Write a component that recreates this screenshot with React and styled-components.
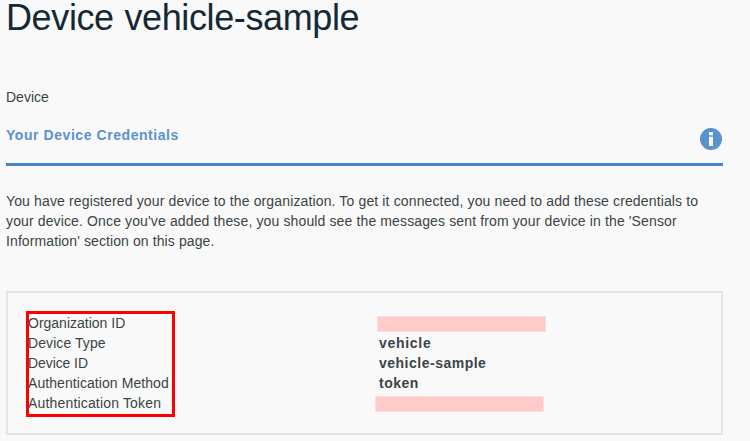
import React from 'react';
import styled, { createGlobalStyle } from 'styled-components';

const GlobalStyle = createGlobalStyle`
  * { box-sizing: border-box; }
  body { margin: 0; background: #f9f9f9; }
`;
const Page = styled.main`
  width: 750px;
  height: 441px;
  padding: 0 27px 0 6px;
  background: #f9f9f9;
  color: #3a4446;
  font: 14px/20px "Liberation Sans", Arial, sans-serif;
`;
const Title = styled.h1`
  margin: 0;
  height: 87px;
  color: #152935;
  font-size: 36px;
  line-height: 36px;
  font-weight: 400;
  letter-spacing: -0.38px;
  word-spacing: 1px;
  white-space: nowrap;
`;
const Crumb = styled.div`
  height: 38px;
`;
const SectionHeader = styled.header`
  display: flex;
  justify-content: space-between;
  height: 41px;
  border-bottom: 3px solid #4885c9;
`;
const SectionTitle = styled.h2`
  margin: 0;
  color: #5a91d0;
  font-size: 14px;
  line-height: 20px;
  letter-spacing: 0.56px;
`;
const InfoIcon = styled.svg`
  width: 24px;
  height: 24px;
  margin-top: 2px;
`;
const Intro = styled.p`
  margin: 25px 0 0;
  height: 100px;
  white-space: nowrap;
`;
const Line = styled.span`
  display: block;
  letter-spacing: ${(p) => p.$tracking}px;
`;
const Card = styled.section`
  display: flex;
  height: 144px;
  padding: 18px 0 0 18px;
  border: 2px solid #e5e5e5;
`;
const Labels = styled.div`
  width: 149px;
  height: 106px;
  border: 3px solid #ff0000;
  margin-right: 201px;
  white-space: nowrap;
`;
const Label = styled.div`
  height: 20px;
  margin: 0 -1px;
  line-height: 18px;
  letter-spacing: ${(p) => p.$tracking}px;
`;
const Values = styled.div`
  padding-top: 3px;
  width: 180px;
`;
const Value = styled.div`
  height: 20px;
  padding-left: 3px;
  line-height: 18px;
  font-weight: 700;
  letter-spacing: ${(p) => p.$tracking}px;
`;
const Redaction = styled.div`
  width: 169px;
  height: 16px;
  margin: ${(p) => (p.$last ? '2px 0 0 -1px' : '2px 0 2px 1px')};
  border: 1px solid #ffdcdc;
  background: #ffcaca;
`;

const labels = [
  ['Organization ID', 0],
  ['Device Type', 0.08],
  ['Device ID', -0.08],
  ['Authentication Method', 0.07],
  ['Authentication Token', 0.17],
];

export default function App() {
  return (
    <>
      <GlobalStyle />
      <Page>
        <Title>Device vehicle-sample</Title>
        <Crumb>Device</Crumb>
        <SectionHeader>
          <SectionTitle>Your Device Credentials</SectionTitle>
          <InfoIcon viewBox="0 0 24 24" aria-label="Information">
            <circle cx="12" cy="12" r="11" fill="#5a92cf" />
            <path d="M10 5h4v3.2h-4zM10 9.8h4V19h-4z" fill="#f9f9f9" />
          </InfoIcon>
        </SectionHeader>
        <Intro>
          <Line $tracking={0.137}>You have registered your device to the organization. To get it connected, you need to add these credentials to</Line>
          <Line $tracking={0.13}>your device. Once you've added these, you should see the messages sent from your device in the 'Sensor</Line>
          <Line $tracking={0.1}>Information' section on this page.</Line>
        </Intro>
        <Card>
          <Labels>
            {labels.map(([text, tracking]) => (
              <Label key={text} $tracking={tracking}>{text}</Label>
            ))}
          </Labels>
          <Values>
            <Redaction />
            <Value $tracking={0.7}>vehicle</Value>
            <Value $tracking={0.5}>vehicle-sample</Value>
            <Value $tracking={0.5}>token</Value>
            <Redaction $last />
          </Values>
        </Card>
      </Page>
    </>
  );
}
